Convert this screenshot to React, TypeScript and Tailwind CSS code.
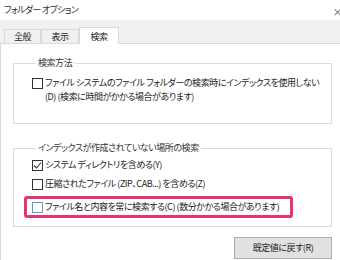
import React from "react";

const font = "font-['Noto_Sans_CJK_JP',sans-serif] [font-feature-settings:'palt'] tracking-[-0.45px]";

interface CheckRowProps {
  label: React.ReactNode;
  checked?: boolean;
  hover?: boolean;
}

const CheckBox = ({ checked, hover }: { checked?: boolean; hover?: boolean }) => (
  <span
    className={`mt-[2px] flex h-[11px] w-[11px] shrink-0 items-center justify-center border bg-white ${
      hover ? "border-[#5b9bd5]" : "border-[#333333]"
    }`}
  >
    {checked && (
      <svg width="9" height="9" viewBox="0 0 9 9">
        <path d="M1 4.5 L3.5 7 L8 1.5" fill="none" stroke="#333" strokeWidth="1.1" />
      </svg>
    )}
  </span>
);

const CheckRow = ({ label, checked, hover }: CheckRowProps) => (
  <div className="flex items-start gap-[2px]">
    <CheckBox checked={checked} hover={hover} />
    <span className="whitespace-nowrap leading-[14px]">{label}</span>
  </div>
);

const Tab = ({ label, active }: { label: string; active?: boolean }) =>
  active ? (
    <div className="-mb-px flex h-[17px] w-[40px] items-start justify-center border border-b-0 border-[#d9d9d9] bg-white pt-[2px] text-[#222]">
      {label}
    </div>
  ) : (
    <div className="flex h-[14px] w-[38px] items-center justify-center border border-b-0 border-[#d9d9d9] bg-[#f0f0f0] text-[#222] first:w-[37px]">
      {label}
    </div>
  );

export default function App() {
  return (
    <div className={`relative h-[260px] w-[340px] overflow-hidden bg-white text-[9px] text-[#222] ${font}`}>
      {/* title bar */}
      <div className="flex h-[20px] items-center pl-[4px] text-[9px] tracking-[-0.7px] text-[#333]">
        フォルダー オプション
      </div>
      <span className="absolute right-[-2px] top-[4px] text-[10px] text-[#555]">×</span>

      {/* tab strip */}
      <div className="flex h-[24px] items-end border-b border-[#d9d9d9] bg-[#f0f0f0] pl-[4px]">
        <Tab label="全般" />
        <Tab label="表示" />
        <Tab label="検索" active />
      </div>

      {/* panel */}
      <div className="flex h-[216px] flex-col border-l border-[#d9d9d9] pl-[12px] pr-[8px] pt-[12px]">
        <fieldset className="border border-[#dcdcdc] pb-[19px] pl-[18px] pt-[6px]">
          <legend className="ml-[4px] px-[2px] leading-[14px] text-[#333]">検索方法</legend>
          <CheckRow
            label={
              <>
                ファイル システムのファイル フォルダーの検索時にインデックスを使用しない
                <br />
                (D) (検索に時間がかかる場合があります)
              </>
            }
          />
        </fieldset>

        <fieldset className="mt-[17px] border border-[#dcdcdc] pb-[8px] pl-[18px] pt-[3px]">
          <legend className="ml-[4px] px-[2px] leading-[14px] text-[#333]">
            インデックスが作成されていない場所の検索
          </legend>
          <div className="flex flex-col gap-[5px]">
            <CheckRow label="システム ディレクトリを含める(Y)" checked />
            <CheckRow label="圧縮されたファイル (ZIP、CAB...) を含める(Z)" />
            <div className="-ml-[8px] w-[269px] rounded-[3px] border-[3px] border-[#e8336b] py-[1px] pl-[5px]">
              <CheckRow label="ファイル名と内容を常に検索する(C) (数分かかる場合があります)" hover />
            </div>
          </div>
        </fieldset>

        <div className="mt-[10px] flex justify-end">
          <button className="flex h-[22px] w-[98px] items-center justify-center border border-[#adadad] bg-[#e1e1e1] text-[9px] text-[#222]">
            既定値に戻す(R)
          </button>
        </div>
      </div>
    </div>
  );
}
